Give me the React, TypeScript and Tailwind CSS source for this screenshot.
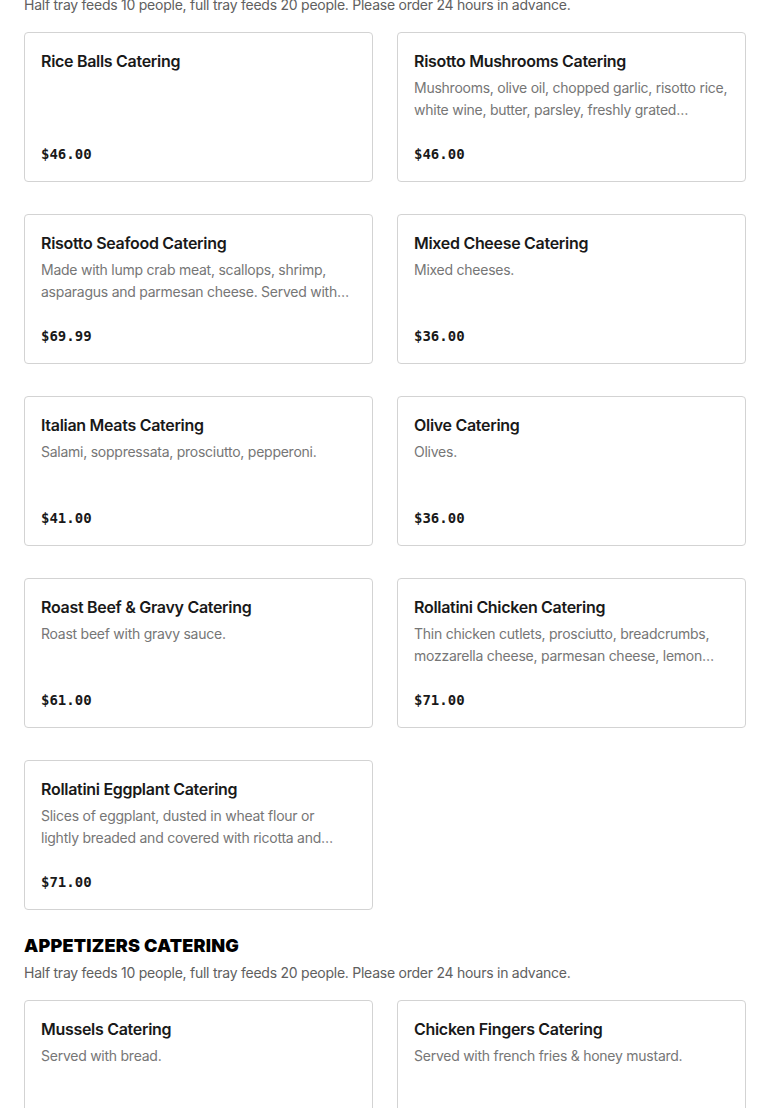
const items = [
  { name: 'Rice Balls Catering', desc: '', price: '$46.00' },
  {
    name: 'Risotto Mushrooms Catering',
    desc: 'Mushrooms, olive oil, chopped garlic, risotto rice, white wine, butter, parsley, freshly grated parmesan cheese.',
    price: '$46.00',
  },
  {
    name: 'Risotto Seafood Catering',
    desc: 'Made with lump crab meat, scallops, shrimp, asparagus and parmesan cheese. Served with garlic bread.',
    price: '$69.99',
  },
  { name: 'Mixed Cheese Catering', desc: 'Mixed cheeses.', price: '$36.00' },
  { name: 'Italian Meats Catering', desc: 'Salami, soppressata, prosciutto, pepperoni.', price: '$41.00' },
  { name: 'Olive Catering', desc: 'Olives.', price: '$36.00' },
  { name: 'Roast Beef & Gravy Catering', desc: 'Roast beef with gravy sauce.', price: '$61.00' },
  {
    name: 'Rollatini Chicken Catering',
    desc: 'Thin chicken cutlets, prosciutto, breadcrumbs, mozzarella cheese, parmesan cheese, lemon juice and white wine sauce.',
    price: '$71.00',
  },
  {
    name: 'Rollatini Eggplant Catering',
    desc: 'Slices of eggplant, dusted in wheat flour or lightly breaded and covered with ricotta and mozzarella cheese.',
    price: '$71.00',
  },
];

const appetizers = [
  { name: 'Mussels Catering', desc: 'Served with bread.', price: '$46.00' },
  { name: 'Chicken Fingers Catering', desc: 'Served with french fries & honey mustard.', price: '$46.00' },
];

function ItemCard({ item }: { item: { name: string; desc: string; price: string } }) {
  return (
    <div className="h-[150px] bg-white border border-[#d3d3d3] rounded-[4px] px-4 pt-4 pb-4 flex flex-col">
      <h3 className="text-[16px] leading-6 font-semibold text-[#191919] tracking-[-0.3px]">{item.name}</h3>
      {item.desc && (
        <p className="mt-1 mr-[1px] text-[14px] leading-[22px] text-[#767676] tracking-[-0.25px] line-clamp-2">
          {item.desc}
        </p>
      )}
      <div
        className="mt-auto text-[14px] leading-[22px] font-bold text-[#191919]"
        style={{ fontFamily: '"DejaVu Sans Mono", "Liberation Mono", monospace' }}
      >
        {item.price}
      </div>
    </div>
  );
}

export default function App() {
  return (
    <div className="bg-white min-h-screen px-6 overflow-hidden" style={{ fontFamily: 'Inter, "Noto Sans", sans-serif' }}>
      <p className="-mt-[6px] text-[14px] leading-[22px] text-[#606060] tracking-[-0.25px]">
        Half tray feeds 10 people, full tray feeds 20 people. Please order 24 hours in advance.
      </p>
      <div className="mt-4 grid grid-cols-2 gap-x-6 gap-y-8">
        {items.map((item) => (
          <ItemCard key={item.name} item={item} />
        ))}
      </div>

      <h2 className="mt-6 text-[18px] leading-6 font-black text-black uppercase tracking-[0.2px]">
        Appetizers Catering
      </h2>
      <p className="mt-1 text-[14px] leading-[22px] text-[#606060] tracking-[-0.25px]">
        Half tray feeds 10 people, full tray feeds 20 people. Please order 24 hours in advance.
      </p>
      <div className="mt-4 grid grid-cols-2 gap-x-6 gap-y-8 pb-10">
        {appetizers.map((item) => (
          <ItemCard key={item.name} item={item} />
        ))}
      </div>
    </div>
  );
}
